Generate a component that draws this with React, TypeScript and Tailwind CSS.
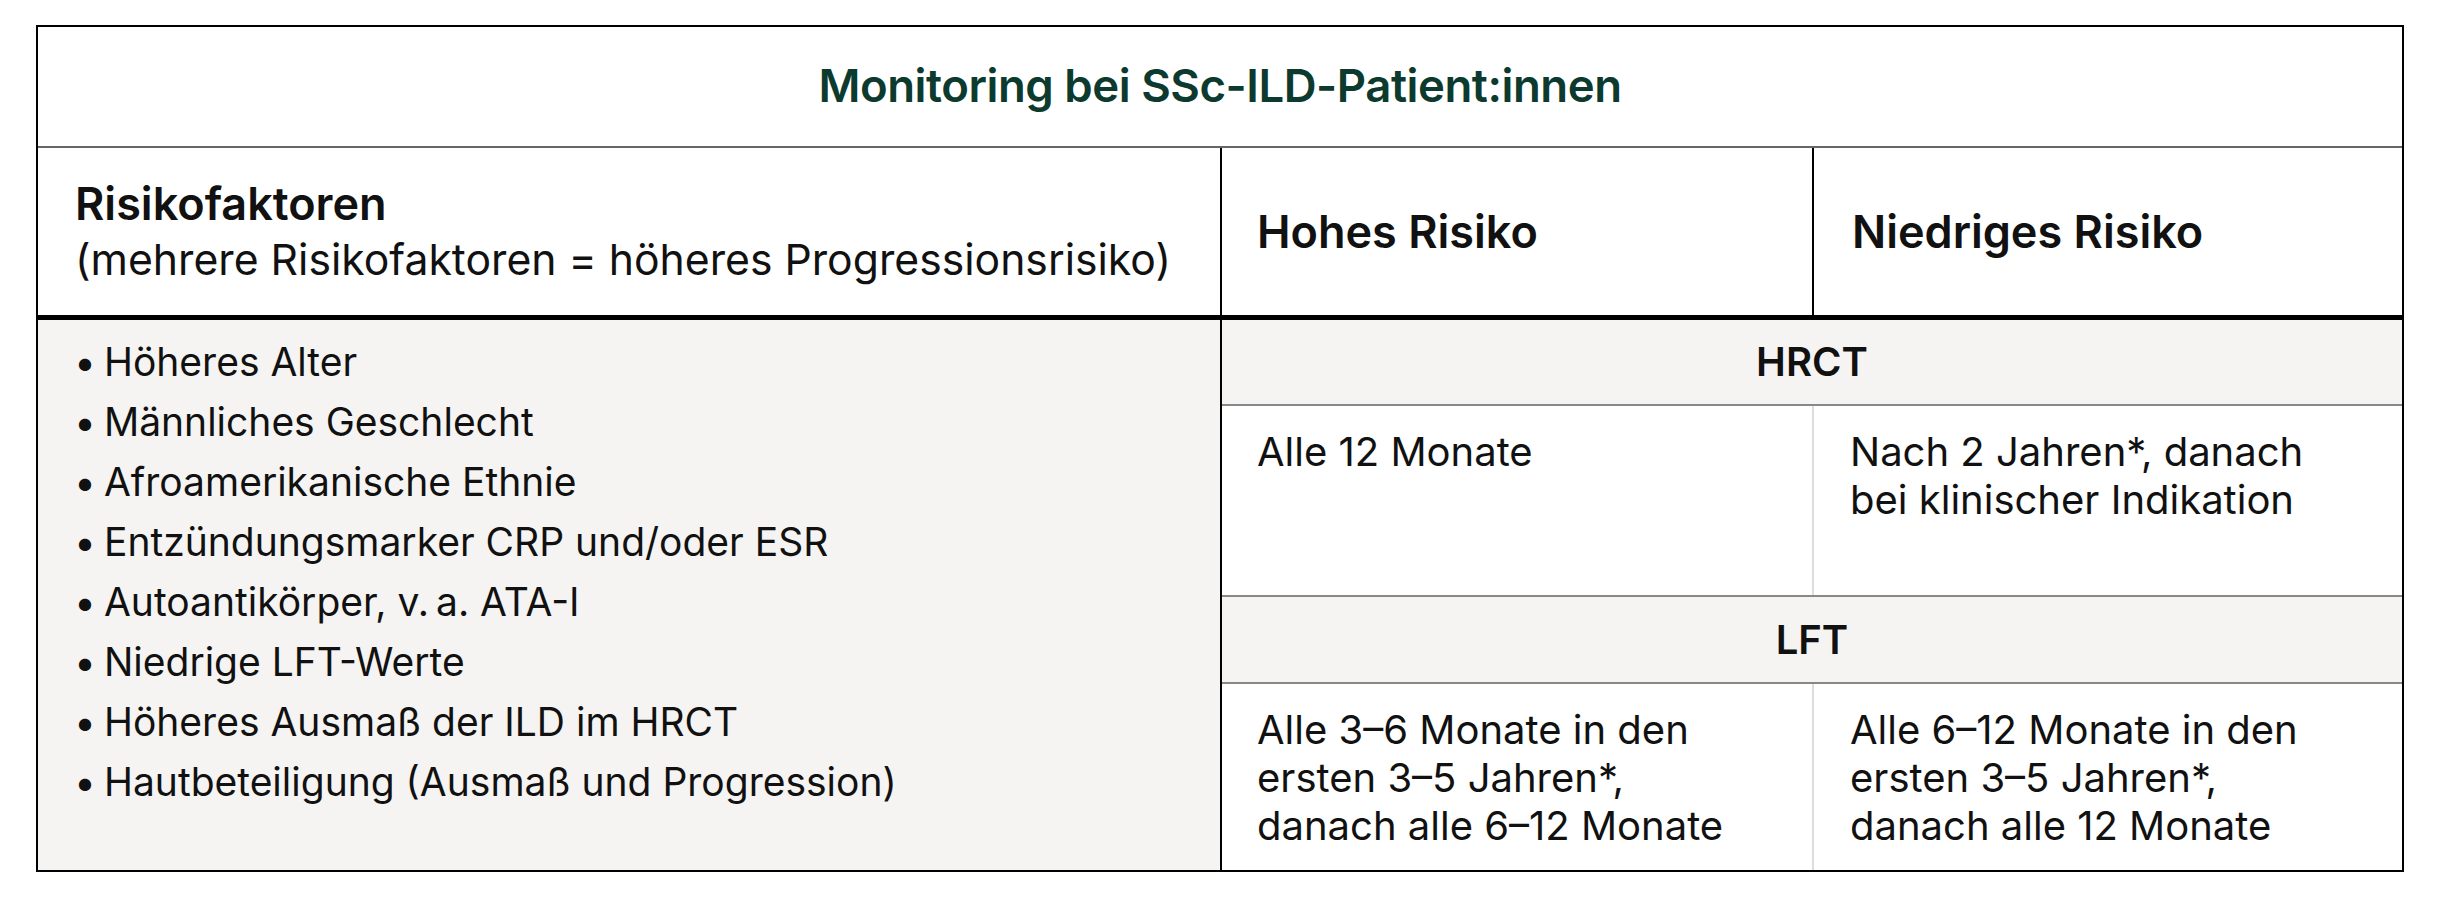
const RISKS = [
  "Höheres Alter",
  "Männliches Geschlecht",
  "Afroamerikanische Ethnie",
  "Entzündungsmarker CRP und/oder ESR",
  "Autoantikörper, v.\u2009a. ATA-I",
  "Niedrige LFT-Werte",
  "Höheres Ausmaß der ILD im HRCT",
  "Hautbeteiligung (Ausmaß und Progression)",
];

const Band = ({ label }: { label: string }) => (
  <div className="flex items-center justify-center bg-[#f5f4f2] font-semibold text-[40px] leading-none">
    {label}
  </div>
);

export default function App() {
  return (
    <div className="bg-white min-h-[910px] pt-[25px] pl-[36px] font-['Inter','Liberation_Sans',sans-serif] text-[#111]">
      <div className="w-[2368px] border-2 border-black">
        <div className="flex h-[121px] items-center justify-center border-b-2 border-[#666] text-[45.5px] font-semibold tracking-[-0.01em] text-[#0d3a2e]">
          Monitoring bei SSc-ILD-Patient:innen
        </div>

        <div className="grid h-[172px] grid-cols-[1182px_592px_1fr] border-b-[5px] border-black">
          <div className="flex flex-col justify-center pl-[37px] text-[42.7px] leading-[56px]">
            <span className="font-semibold text-[45px]">Risikofaktoren</span>
            <span>(mehrere Risikofaktoren = höheres Progressionsrisiko)</span>
          </div>
          <div className="flex items-center border-l-2 border-black pl-[35px] text-[45px] font-semibold">
            Hohes Risiko
          </div>
          <div className="flex items-center border-l-2 border-black pl-[38px] text-[45px] font-semibold">
            Niedriges Risiko
          </div>
        </div>

        <div className="grid grid-cols-[1182px_1fr]">
          <ul className="bg-[#f5f4f2] pl-[36px] pt-[12px] text-[39px] leading-[60px]">
            {RISKS.map((r) => (
              <li key={r} className="flex gap-[8px]">
                <span>•</span>
                <span>{r}</span>
              </li>
            ))}
          </ul>

          <div className="grid grid-rows-[84px_191px_87px_188px] border-l-2 border-black">
            <Band label="HRCT" />
            <div className="grid grid-cols-[590px_1fr] border-t-2 border-[#888] text-[40px] leading-[48px]">
              <div className="pl-[35px] pt-[22px]">Alle 12 Monate</div>
              <div className="border-l-2 border-[#ddd] pl-[36px] pt-[22px]">
                Nach 2 Jahren*, danach
                <br />
                bei klinischer Indikation
              </div>
            </div>
            <div className="border-t-2 border-[#888] grid">
              <Band label="LFT" />
            </div>
            <div className="grid grid-cols-[590px_1fr] border-t-2 border-[#888] text-[40px] leading-[48px]">
              <div className="pl-[35px] pt-[22px]">
                Alle 3–6 Monate in den
                <br />
                ersten 3–5 Jahren*,
                <br />
                danach alle 6–12 Monate
              </div>
              <div className="border-l-2 border-[#ddd] pl-[36px] pt-[22px]">
                Alle 6–12 Monate in den
                <br />
                ersten 3–5 Jahren*,
                <br />
                danach alle 12 Monate
              </div>
            </div>
          </div>
        </div>
      </div>
    </div>
  );
}
